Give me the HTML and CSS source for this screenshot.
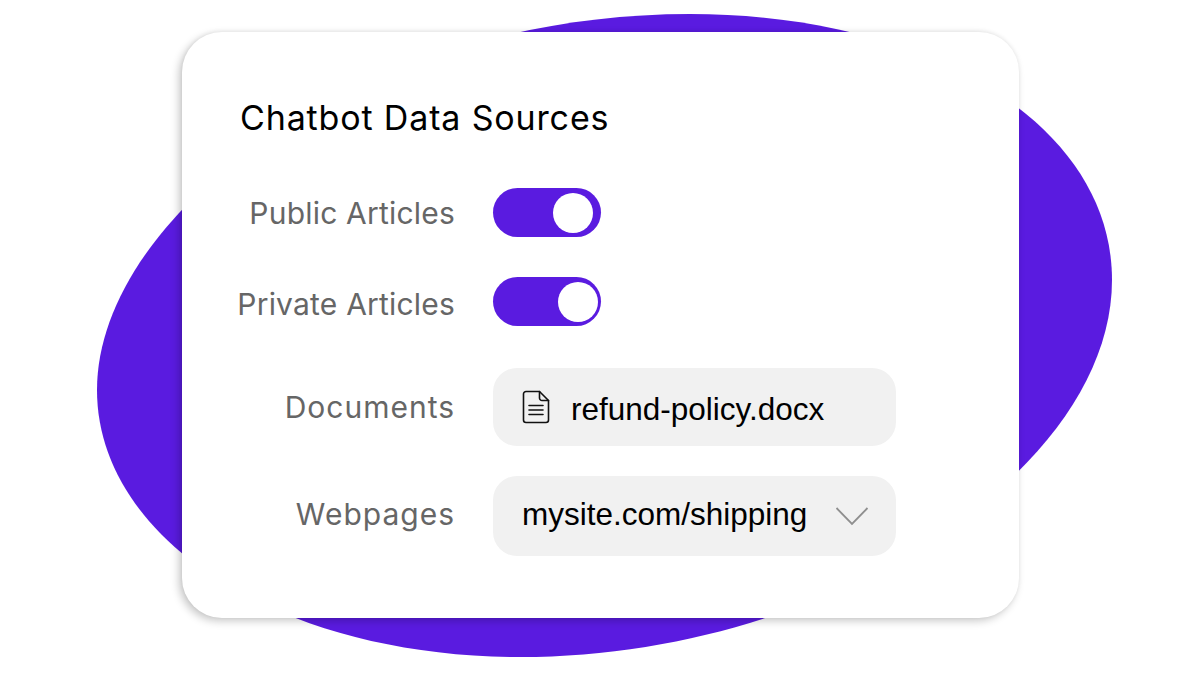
FILE: index.html
```html
<!DOCTYPE html>
<html lang="en">
<head>
    <meta charset="UTF-8">
    <title>Chatbot Data Sources</title>
    <link rel="stylesheet" href="styles.css">
</head>
<body>

<svg class="blob" width="1200" height="675" viewBox="0 0 1200 675">
    <path d="M690 14C930 14 1112 125 1112 280C1112 470 830 657 520 657C280 657 97 540 97 390C97 215 360 14 690 14Z" fill="#5a1be0"/>
</svg>

<div class="card">
    <h1 class="card-title">Chatbot Data Sources</h1>

    <div class="row row-public">
        <span class="row-label">Public Articles</span>
        <div class="toggle toggle-public"><span class="knob"></span></div>
    </div>

    <div class="row row-private">
        <span class="row-label label-private">Private Articles</span>
        <div class="toggle toggle-private"><span class="knob"></span></div>
    </div>

    <div class="row row-documents">
        <span class="row-label label-wide">Documents</span>
        <div class="field field-doc">
            <svg class="doc-icon" width="28" height="34" viewBox="0 0 28 34" fill="none" stroke="#111" stroke-width="1.6" stroke-linejoin="round" stroke-linecap="round">
                <path d="M4 1.5H17.5L26.5 10.5V30A2.5 2.5 0 0 1 24 32.5H4A2.5 2.5 0 0 1 1.5 30V4A2.5 2.5 0 0 1 4 1.5Z"/>
                <path d="M17.5 1.5V8A2.5 2.5 0 0 0 20 10.5H26.5"/>
                <path d="M7 15.5H21M7 20H21M7 24.5H21"/>
            </svg>
            <span class="doc-name">refund-policy.docx</span>
        </div>
    </div>

    <div class="row row-webpages">
        <span class="row-label label-wide">Webpages</span>
        <div class="field field-select">
            <span class="select-value">mysite.com/shipping</span>
            <svg class="chevron" width="34" height="20" viewBox="0 0 34 20" fill="none" stroke="#8f8f8f" stroke-width="1.8">
                <path d="M1.5 2L17 18L32.5 2"/>
            </svg>
        </div>
    </div>
</div>

</body>
</html>
```

FILE: styles.css
```css
html, body {
    margin: 0;
    padding: 0;
    height: 675px;
    overflow: hidden;
    background-color: #fff;
}

.blob {
    position: absolute;
    top: 0;
    left: 0;
}

.card {
    position: relative;
    box-sizing: border-box;
    width: 837px;
    height: 586px;
    margin: 32px 0 0 182px;
    padding: 64px 0 0 48px;
    background-color: #fff;
    border-radius: 40px;
    box-shadow: -3px 3px 9px rgba(0, 0, 0, 0.22), 0 -1px 4px rgba(0, 0, 0, 0.06);
}

.card-title {
    margin: 0 0 0 10px;
    height: 44px;
    font-family: "Inter", "Liberation Sans", sans-serif;
    font-size: 34px;
    line-height: 44px;
    letter-spacing: 0.85px;
    font-weight: 400;
    color: #000;
}

.row {
    display: flex;
    align-items: center;
    gap: 38px;
}

.row-public { margin-top: 48px; }
.row-private { margin-top: 40px; }
.row-documents { margin-top: 42px; }
.row-webpages { margin-top: 30px; }

.row-label {
    width: 225px;
    text-align: right;
    font-family: "Inter", "Liberation Sans", sans-serif;
    font-size: 30px;
    letter-spacing: 0.2px;
    color: #666;
}

.label-private { padding-top: 5px; }
.label-wide { letter-spacing: 1px; }
.row-webpages .row-label { padding-bottom: 4px; }

.toggle {
    display: flex;
    align-items: center;
    justify-content: flex-end;
    box-sizing: border-box;
    width: 108px;
    height: 49px;
    border-radius: 25px;
    background-color: #5a1be0;
}

.toggle-public { padding-right: 8px; }
.toggle-private { padding-right: 3px; }

.knob {
    width: 40px;
    height: 40px;
    border-radius: 50%;
    background-color: #fff;
}

.field {
    display: flex;
    align-items: center;
    box-sizing: border-box;
    width: 403px;
    padding-left: 29px;
    border-radius: 24px;
    background-color: #f1f1f1;
    font-family: "Liberation Sans", Arial, sans-serif;
    font-size: 31.5px;
    color: #000;
}

.field-doc {
    height: 78px;
    gap: 21px;
}

.field-select {
    height: 80px;
    gap: 28px;
}

.doc-name { padding-top: 5px; }
.select-value { padding-bottom: 4px; }
```
